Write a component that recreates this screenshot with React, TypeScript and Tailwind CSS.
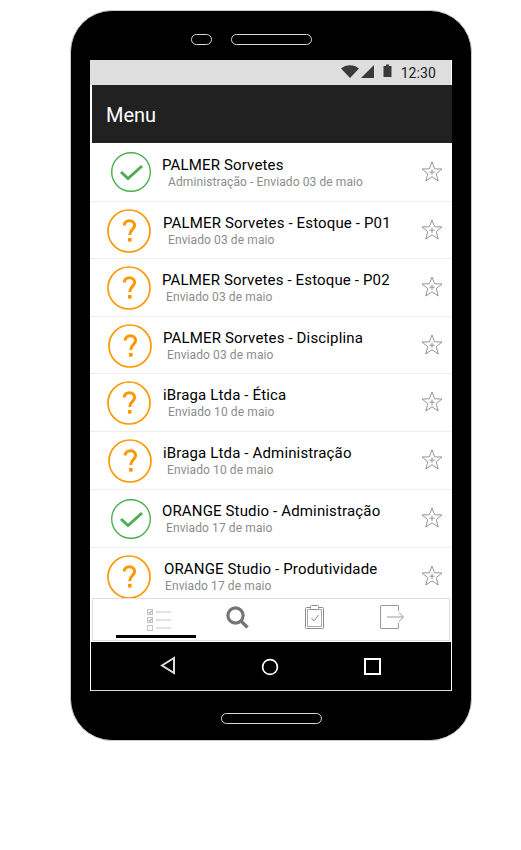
import React from 'react';

interface Row {
  title: string;
  sub: string;
  done: boolean;
  rowClass: string;
  iconClass: string;
  titleClass: string;
  subClass: string;
  starClass: string;
}

const rows: Row[] = [
  { title: 'PALMER Sorvetes', sub: 'Administração - Enviado 03 de maio', done: true, rowClass: 'h-[59px]', iconClass: 'ml-[19px] mt-[-1px]', titleClass: 'ml-[0px]', subClass: 'ml-[6px]', starClass: 'mt-[-1px]' },
  { title: 'PALMER Sorvetes - Estoque - P01', sub: 'Enviado 03 de maio', done: false, rowClass: 'h-[57px]', iconClass: 'ml-[15px] mt-[1px]', titleClass: 'ml-[1px]', subClass: 'ml-[6px]', starClass: 'mt-[-1px]' },
  { title: 'PALMER Sorvetes - Estoque - P02', sub: 'Enviado 03 de maio', done: false, rowClass: 'h-[58px]', iconClass: 'ml-[15px]', titleClass: 'ml-[0px]', subClass: 'ml-[4px]', starClass: 'mt-[-2px]' },
  { title: 'PALMER Sorvetes - Disciplina', sub: 'Enviado 03 de maio', done: false, rowClass: 'h-[57px]', iconClass: 'ml-[16px] mt-[1px]', titleClass: 'ml-[0px]', subClass: 'ml-[4px]', starClass: 'mt-[-1px]' },
  { title: 'iBraga Ltda - Ética', sub: 'Enviado 10 de maio', done: false, rowClass: 'h-[58px]', iconClass: 'ml-[15px]', titleClass: 'ml-[1px]', subClass: 'ml-[6px]', starClass: 'mt-[-2px]' },
  { title: 'iBraga Ltda - Administração', sub: 'Enviado 10 de maio', done: false, rowClass: 'h-[58px]', iconClass: 'ml-[16px]', titleClass: 'ml-[0px]', subClass: 'ml-[4px]', starClass: 'mt-[-2px]' },
  { title: 'ORANGE Studio - Administração', sub: 'Enviado 17 de maio', done: true, rowClass: 'h-[58px]', iconClass: 'ml-[19px]', titleClass: 'ml-[0px]', subClass: 'ml-[4px]', starClass: 'mt-[-2px]' },
  { title: 'ORANGE Studio - Produtividade', sub: 'Enviado 17 de maio', done: false, rowClass: 'h-[58px]', iconClass: 'ml-[15px]', titleClass: 'ml-[2px]', subClass: 'ml-[3px]', starClass: 'mt-[-2px]' },
];

const StatusIcon = ({ done }: { done: boolean }) =>
  done ? (
    <svg width="40" height="40" viewBox="0 0 40 40" fill="none">
      <circle cx="20" cy="20" r="19.3" stroke="#4caf50" strokeWidth="1.4" />
      <path d="M10 20 L17 26.5 L31 14" stroke="#4caf50" strokeWidth="3" />
    </svg>
  ) : (
    <svg width="44" height="44" viewBox="0 0 44 44" fill="none">
      <circle cx="22" cy="22" r="21" stroke="#ff9800" strokeWidth="1.7" />
      <path d="M17.2 16.5 C17.2 10 27.6 10 27.6 16.5 C27.6 20.5 22.8 20.5 22.8 26" stroke="#ff9800" strokeWidth="3" />
      <rect x="21" y="29" width="3.6" height="3.6" fill="#ff9800" />
    </svg>
  );

const Star = () => (
  <svg width="22" height="21" viewBox="0 0 22 21" fill="none" stroke="#8a8a8a" strokeWidth="0.9">
    <path d="M11 1 L13.6 7.8 L21 8 L15.2 12.6 L17.2 20 L11 15.8 L4.8 20 L6.8 12.6 L1 8 L8.4 7.8 Z" />
    <path d="M11 8.5 V14 M8.3 11.2 H13.7" />
  </svg>
);

export default function App() {
  return (
    <div className="w-[521px] h-[850px] bg-white pt-[10px] pl-[70px] font-['Roboto',sans-serif]">
      <div className="w-[402px] h-[731px] bg-black rounded-[42px] border border-[#c8c8c8] flex flex-col items-center">
        {/* top speaker */}
        <div className="flex gap-[19px] mt-[23px] h-[11px] mr-[40px]">
          <div className="w-[21px] h-[11px] rounded-full border border-[#d8d8d8]" />
          <div className="w-[81px] h-[11px] rounded-full border border-[#d8d8d8]" />
        </div>

        <div className="w-[362px] h-[631px] mt-[15px] self-start ml-[19px] bg-white flex flex-col">
          {/* status bar */}
          <div className="h-[25px] w-[361px] bg-[#dedede] flex items-center justify-end pr-[15px] text-[#212121]">
            <svg width="18" height="13" viewBox="0 0 18 13" className="mr-[2px] mb-[3px]" fill="#3a3a3a">
              <path d="M0 3.5 C5 -1 13 -1 18 3.5 L9 13 Z" />
            </svg>
            <svg width="14" height="13" viewBox="0 0 14 13" className="mr-[8px] mb-[2px]" fill="#3a3a3a">
              <path d="M13 0 V13 H0 Z" />
            </svg>
            <svg width="9" height="14" viewBox="0 0 9 14" className="mr-[9px] mb-[4px]" fill="#3a3a3a">
              <path d="M0.5 2 H3 V0.5 H6 V2 H8.5 V13 H0.5 Z" />
            </svg>
            <span className="text-[14px] tracking-[0.1px] leading-none mt-[1px]">12:30</span>
          </div>

          {/* header */}
          <div className="h-[58px] ml-[2px] bg-[#212121] flex items-center pl-[14px] pt-[1px] text-white text-[20px]">Menu</div>

          {/* list */}
          <div className="h-[455px] overflow-hidden flex flex-col">
            {rows.map((row) => (
              <div key={row.title} className={`${row.rowClass} shrink-0 flex items-center border-b border-[#eeeeee] pl-[2px]`}>
                <div className={`w-[70px] shrink-0 flex ${row.iconClass}`}>
                  <StatusIcon done={row.done} />
                </div>
                <div className={`flex-1 flex flex-col mt-[2px] ${row.done ? '-ml-[19px]' : '-ml-[15px]'}`}>
                  <span className={`${row.titleClass} text-[15px] tracking-[0.15px] leading-[17px] text-black`}>{row.title}</span>
                  <span className={`${row.subClass} text-[12px] tracking-[0.1px] leading-[16px] text-[#8c8c8c]`}>{row.sub}</span>
                </div>
                <div className={`mr-[9px] ${row.starClass}`}>
                  <Star />
                </div>
              </div>
            ))}
          </div>

          {/* tabs */}
          <div className="h-[43px] mx-[2px] border border-[#dddddd] flex items-stretch">
            <div className="w-[23px]" />
            <div className="w-[80px] flex flex-col items-center justify-end">
              <svg width="24" height="24" viewBox="0 0 24 24" fill="none" stroke="#c4c4c4" className="mb-[3px] ml-[6px]">
                <rect x="0.5" y="1.5" width="5" height="5" />
                <rect x="0.5" y="9.5" width="5" height="5" />
                <rect x="0.5" y="17.5" width="5" height="5" />
                <path d="M9 4 H24 M9 12 H24 M9 20 H24" />
                <path d="M1.5 4 L3 5.5 L5 2.5 M1.5 12 L3 13.5 L5 10.5" stroke="#999" />
              </svg>
              <div className="w-full h-[3px] bg-black mb-[2px]" />
            </div>
            <div className="w-[80px] flex justify-center pt-[7px] pl-[2px]">
              <svg width="23" height="23" viewBox="0 0 23 23" fill="none" stroke="#757575">
                <circle cx="9.5" cy="9.5" r="7.6" strokeWidth="3.2" />
                <path d="M15 15 L21.5 21.5" strokeWidth="3.4" />
              </svg>
            </div>
            <div className="w-[78px] flex justify-center pt-[6px]">
              <svg width="20" height="24" viewBox="0 0 20 24" fill="none" stroke="#8c8c8c">
                <rect x="0.5" y="2.5" width="18" height="21" rx="1" />
                <rect x="2.5" y="4.5" width="14" height="17" stroke="#aaa" />
                <rect x="5.5" y="0.5" width="8" height="4" rx="1" fill="#fff" />
                <path d="M6.5 13 L9 16 L13.5 10" />
              </svg>
            </div>
            <div className="w-[76px] flex justify-center pt-[6px]">
              <svg width="24" height="24" viewBox="0 0 24 24" fill="none" stroke="#9a9a9a">
                <path d="M18.5 6 V1 Q18.5 0.5 18 0.5 H1 Q0.5 0.5 0.5 1 V23 Q0.5 23.5 1 23.5 H18 Q18.5 23.5 18.5 23 V18" />
                <path d="M7 12 H23 M19 7.5 L23.5 12 L19 16.5" />
              </svg>
            </div>
          </div>

          {/* android nav */}
          <div className="h-[49px] mt-[1px] mx-[1px] bg-black border-b border-[#dddddd] flex items-center pt-[1px]">
            <svg width="16" height="19" viewBox="0 0 16 19" fill="none" stroke="#dddddd" strokeWidth="2" className="ml-[69px] mb-[2px]">
              <path d="M14 2 V17 L2 9.5 Z" />
            </svg>
            <svg width="18" height="18" viewBox="0 0 18 18" fill="none" stroke="#ffffff" strokeWidth="1.7" className="ml-[85px]">
              <circle cx="9" cy="9" r="7.4" />
            </svg>
            <svg width="17" height="17" viewBox="0 0 17 17" fill="none" stroke="#ffffff" strokeWidth="2" className="ml-[85px]">
              <rect x="1" y="1" width="15" height="15" />
            </svg>
          </div>
        </div>

        {/* bottom speaker */}
        <div className="w-[101px] h-[11px] mt-[22px] rounded-full border border-[#d8d8d8]" />
      </div>
    </div>
  );
}
